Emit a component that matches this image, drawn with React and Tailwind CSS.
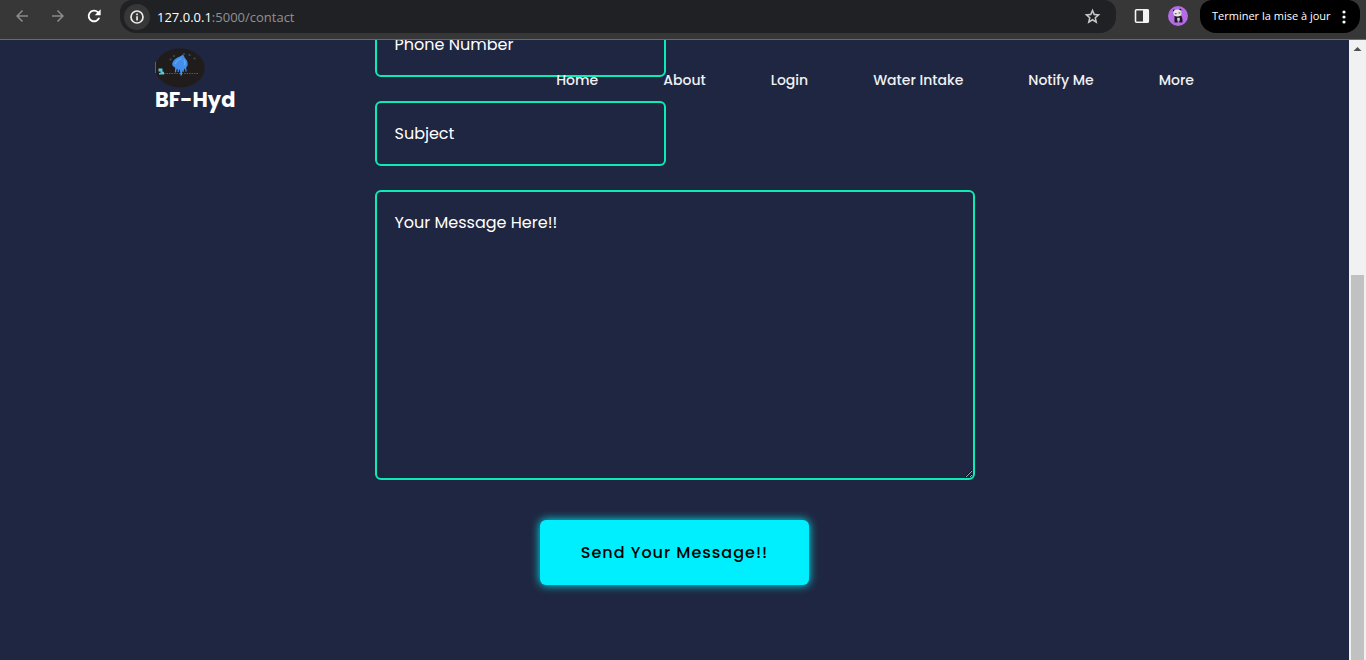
import React from "react";

const links = ["Home", "About", "Login", "Water Intake", "Notify Me", "More"];

function Icon({ d, className }) {
  return (
    <svg viewBox="0 0 24 24" className={className} fill="currentColor" aria-hidden="true">
      <path d={d} />
    </svg>
  );
}

function Panda() {
  return (
    <svg viewBox="0 0 20 20" className="size-5" aria-hidden="true">
      <circle cx="10" cy="10" r="10" fill="#b56be6" />
      <path d="M6.500 10h7l1 3.500v3h-3.200v-2.500H9.700v2.500H6.500v-3z" fill="#1c1a20" />
      <path d="M9.200 11.800h2.600v2.800H9.200z" fill="#cfc8d6" />
      <circle cx="6" cy="4.600" r="1.100" fill="#1c1a20" />
      <circle cx="12.300" cy="3.900" r="1.100" fill="#1c1a20" />
      <ellipse cx="9.400" cy="7" rx="4.100" ry="3.400" fill="#e6e6e6" />
      <path d="M6.600 7.200 8.800 7l-.5 1.200H7zM10.500 6.600l2-.3-.3 1.200h-1.500z" fill="#55515c" />
    </svg>
  );
}

function Toolbar() {
  return (
    <div className="flex h-10 shrink-0 items-start border-b border-[#6a6a6a] bg-[#373737] pl-3 pr-1.5 font-['Open_Sans',sans-serif]">
      <div className="flex h-8 items-center gap-4 text-[#8b8b8b]">
        <button aria-label="Back" className="size-5">
          <Icon className="size-[18px] m-px" d="M20 11H7.830l5.590-5.590L12 4l-8 8 8 8 1.410-1.410L7.830 13H20z" />
        </button>
        <button aria-label="Forward" className="size-5">
          <Icon className="size-[18px] m-px" d="m12 4-1.410 1.410L16.170 11H4v2h12.170l-5.580 5.590L12 20l8-8z" />
        </button>
        <button aria-label="Reload" className="size-5 text-white">
          <Icon
            className="size-5"
            d="M17.300 6.700A7.500 7.500 0 1 0 19.300 14h-2.400A5.300 5.300 0 1 1 15.800 8.200L13 11H20V4z"
          />
        </button>
      </div>
      <div className="ml-4 flex h-[33px] min-w-0 flex-1 items-center rounded-b-2xl rounded-t-xl bg-[#202124] pl-1 pr-3.5">
        <button aria-label="Site information" className="flex size-[26px] items-center justify-center rounded-full bg-[#373737] text-[#ececec]">
          <svg viewBox="0 0 16 16" className="size-4" aria-hidden="true">
            <circle cx="8" cy="8" r="6" fill="none" stroke="currentColor" strokeWidth="1.700" />
            <path d="M7.200 7.200h1.700v4.300H7.200zM7.200 4.500h1.700v1.700H7.200z" fill="currentColor" />
          </svg>
        </button>
        <p className="ml-[7px] flex-1 text-[13px] leading-5 text-[#8f9296]">
          <span className="text-white">127.0.0.1</span>:5000/contact
        </p>
        <button aria-label="Bookmark" className="text-[#c7c7c7]">
          <Icon
            className="size-[19px]"
            d="m22 9.240-7.190-.62L12 2 9.190 8.630 2 9.240l5.460 4.730L5.820 21 12 17.270 18.180 21l-1.630-7.030zM12 14.900l-3.300 2 .9-3.700-2.900-2.500 3.800-.35L12 6.900l1.500 3.450 3.800.35-2.900 2.500.9 3.700z"
          />
        </button>
      </div>
      <div className="ml-[18px] flex h-8 items-center gap-[18px]">
        <button aria-label="Side panel">
          <svg viewBox="0 0 16 16" className="size-4" aria-hidden="true">
            <rect x="1.500" y="1.800" width="12.800" height="12.400" rx="1" fill="none" stroke="#f4f4f4" strokeWidth="1.600" />
            <path d="M9 1.500h5.500v13H9z" fill="#f4f4f4" />
          </svg>
        </button>
        <button aria-label="Profile">
          <Panda />
        </button>
      </div>
      <button className="ml-3 flex h-[33px] w-40 items-center justify-between whitespace-nowrap rounded-b-2xl rounded-t-xl bg-black pl-3 pr-2 text-[11px] text-white">
        Terminer la mise à jour
        <svg viewBox="0 0 16 16" className="size-4 shrink-0" fill="white" aria-hidden="true">
          <circle cx="8" cy="3" r="1.600" />
          <circle cx="8" cy="8" r="1.600" />
          <circle cx="8" cy="13" r="1.600" />
        </svg>
      </button>
    </div>
  );
}

function LogoMark() {
  return (
    <svg viewBox="0 0 50 40" className="h-10 w-[50px]" aria-hidden="true">
      <ellipse cx="25" cy="20" rx="24.700" ry="19.500" fill="#201c1c" />
      <path d="M.4 14v11" stroke="#77787c" strokeWidth=".8" />
      <g fill="#25546a">
        <circle cx="15.500" cy="11.500" r="1.100" />
        <circle cx="19" cy="8" r="1" />
        <circle cx="29" cy="6" r="1" />
        <circle cx="34.500" cy="7" r="1.100" />
        <circle cx="39.500" cy="10.500" r="1.100" />
      </g>
      <path d="M9 25.500h35" stroke="#2b687d" strokeWidth="1.100" strokeDasharray="1.500 1" />
      <path
        d="M28 6.500c1.200 1.500 1.500 3 2.800 4.500 1.300 1.700 2 3.500 1.900 5.200 0 1.300-.7 2.300-1.500 3l.4 4.300-1.100.2-.5-3.200-1 .7-.3 2.600-1.100.1-.3-2-.4 5.600h-1.500l-.5-5.700-.8-.2-.4 2.400h-1.100l-.1-3.200-1 .4-.5 3.300-1.100-.2.3-4.800c-1.800-.8-3-2-3-3.600 0-2 1.800-4 4.100-5.700 2.300-1.700 5.100-1.900 6.700-3.700z"
        fill="#438eea"
      />
      <path d="M26.500 10.500c-3.500 1.200-6 3.200-6.200 5.800M28.800 12c1.300 1.800 1.200 3.800.2 5" stroke="#62a8f4" strokeWidth="1.300" fill="none" />
      <path d="M3.500 20.500h4v3.300H9v2.700H4V25h1.500v-1.500h-2z" fill="#52c8dc" />
    </svg>
  );
}

function Header() {
  return (
    <header className="absolute inset-x-0 top-0 z-10 flex h-20 items-center justify-between px-[155px] text-white">
      <a href="#home" className="flex flex-col text-[21px] font-bold leading-6">
        <LogoMark />
        BF-Hyd
      </a>
      <nav>
        <ul className="flex gap-[65px] text-sm font-medium leading-6 text-[#f0f0f3]">
          {links.map((label) => (
            <li key={label}>
              <a href="#nav" className="whitespace-nowrap">{label}</a>
            </li>
          ))}
        </ul>
      </nav>
    </header>
  );
}

const field = "block rounded-md border-2 border-[#0cebb5] bg-transparent px-[18px] text-base text-white placeholder:text-white placeholder:opacity-100";

function ContactForm() {
  return (
    <form className="mx-auto -mt-7 flex w-full max-w-[600px] flex-col items-start gap-6" onSubmit={(e) => e.preventDefault()}>
      <input type="tel" aria-label="Phone Number" placeholder="Phone Number" className={field + " h-[65px] w-[291px]"} />
      <input type="text" aria-label="Subject" placeholder="Subject" className={field + " h-[65px] w-[291px]"} />
      <textarea aria-label="Your Message" placeholder="Your Message Here!!" className={field + " h-[290px] w-full resize py-[19px]"} />
      <button
        type="submit"
        className="mt-4 h-[65px] w-[269px] self-center rounded-md bg-[#00efff] text-base font-medium tracking-[1px] text-black shadow-[0_0_10px_#00efff]"
      >
        Send Your Message!!
      </button>
    </form>
  );
}

function Scrollbar() {
  return (
    <div className="flex w-[17px] shrink-0 flex-col items-center bg-[#f1f1f1]" aria-hidden="true">
      <svg viewBox="0 0 17 17" className="size-[17px] shrink-0">
        <path d="M4.500 11 8.500 7l4 4z" fill="#505050" />
      </svg>
      <div className="basis-[218px]" />
      <div className="w-[13px] flex-1 bg-[#c1c1c1]" />
    </div>
  );
}

export default function App() {
  return (
    <div className="flex h-screen flex-col overflow-hidden">
      <Toolbar />
      <div className="flex min-h-0 flex-1">
        <main className="relative min-w-0 flex-1 overflow-hidden bg-[#1f2641] font-['Poppins','Inter',sans-serif]">
          <Header />
          <ContactForm />
        </main>
        <Scrollbar />
      </div>
    </div>
  );
}
